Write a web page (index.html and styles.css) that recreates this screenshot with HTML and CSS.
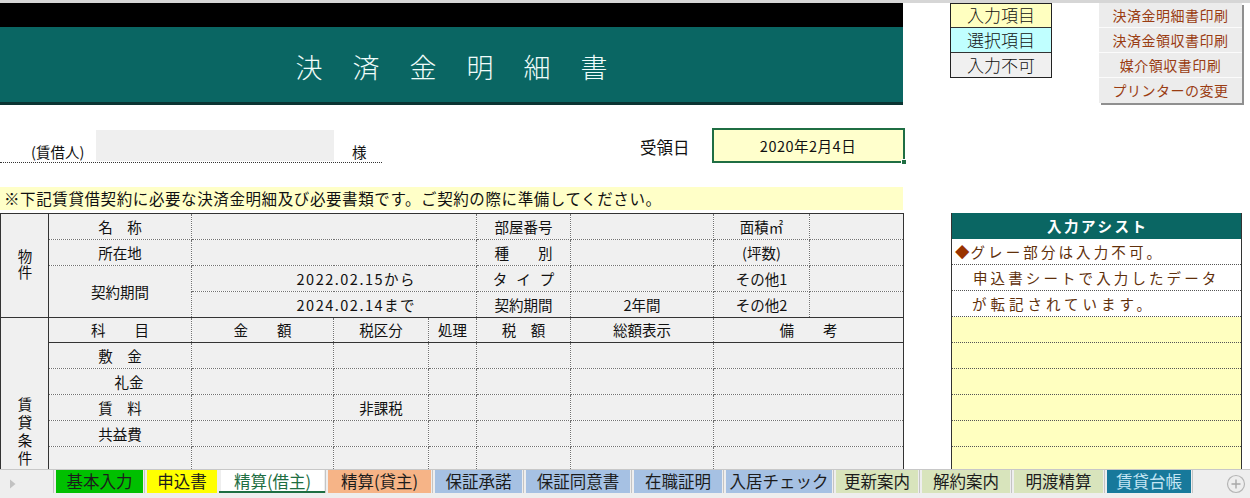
FILE: index.html
```html
<!DOCTYPE html>
<html lang="ja">
<head>
<meta charset="utf-8">
<title>決済金明細書</title>
<link rel="stylesheet" href="styles.css">
</head>
<body>
<div class="page">
  <div class="topline"></div>
  <div class="sheet">
    <div class="main">
      <div class="blackbar"></div>
      <div class="title-band"><h1 class="title">決済金明細書</h1></div>
      <div class="renter-row">
        <div class="renter">
          <span class="renter-label">(賃借人)</span>
          <span class="renter-name"></span>
          <span class="sama">様</span>
        </div>
        <span class="receipt-label">受領日</span>
        <div class="receipt-date">2020年2月4日<span class="handle"></span></div>
      </div>
      <div class="note">※下記賃貸借契約に必要な決済金明細及び必要書類です。ご契約の際に準備してください。</div>
      <table class="grid">
        <colgroup>
          <col class="c48"><col class="c143"><col class="c142"><col class="c95"><col class="c48"><col class="c94"><col class="c143"><col class="c96"><col class="c94">
        </colgroup>
        <tr>
          <td class="side-head sec-bottom" rowspan="4"><span class="vert v1">物件</span></td>
          <td>名　称</td><td colspan="3"></td><td>部屋番号</td><td></td><td>面積㎡</td><td></td>
        </tr>
        <tr>
          <td>所在地</td><td colspan="3"></td><td>種　　別</td><td></td><td>(坪数)</td><td></td>
        </tr>
        <tr>
          <td class="sec-bottom" rowspan="2">契約期間</td><td colspan="3" class="date">2022.02.15から</td><td><span class="spaced">タイプ</span></td><td></td><td>その他1</td><td></td>
        </tr>
        <tr class="sec-end">
          <td colspan="3" class="date">2024.02.14まで</td><td>契約期間</td><td>2年間</td><td>その他2</td><td></td>
        </tr>
        <tr class="head-row">
          <td class="side-head" rowspan="9"><span class="vert v2">賃貸条件</span></td>
          <td>科　　目</td><td>金　　額</td><td>税区分</td><td>処理</td><td>税　額</td><td>総額表示</td><td colspan="2">備　　考</td>
        </tr>
        <tr><td>敷　金</td><td></td><td></td><td></td><td></td><td></td><td colspan="2"></td></tr>
        <tr><td class="reikin">礼金</td><td></td><td></td><td></td><td></td><td></td><td colspan="2"></td></tr>
        <tr><td>賃　料</td><td></td><td>非課税</td><td></td><td></td><td></td><td colspan="2"></td></tr>
        <tr><td>共益費</td><td></td><td></td><td></td><td></td><td></td><td colspan="2"></td></tr>
        <tr><td></td><td></td><td></td><td></td><td></td><td></td><td colspan="2"></td></tr>
        <tr><td></td><td></td><td></td><td></td><td></td><td></td><td colspan="2"></td></tr>
        <tr><td></td><td></td><td></td><td></td><td></td><td></td><td colspan="2"></td></tr>
        <tr><td></td><td></td><td></td><td></td><td></td><td></td><td colspan="2"></td></tr>
      </table>
    </div>
    <div class="side">
      <div class="side-top">
        <div class="legend">
          <div class="legend-item lg-input">入力項目</div>
          <div class="legend-item lg-select">選択項目</div>
          <div class="legend-item lg-locked">入力不可</div>
        </div>
        <div class="buttons">
          <div class="btn">決済金明細書印刷</div>
          <div class="btn">決済金領収書印刷</div>
          <div class="btn">媒介領収書印刷</div>
          <div class="btn">プリンターの変更</div>
        </div>
      </div>
      <div class="assist">
        <div class="assist-head">入力アシスト</div>
        <div class="arow first"><span class="diamond">◆</span>グレー部分は入力不可。</div>
        <div class="arow">申込書シートで入力したデータ</div>
        <div class="arow wide">が転記されています。</div>
        <div class="arow yellow"></div>
        <div class="arow yellow"></div>
        <div class="arow yellow"></div>
        <div class="arow yellow"></div>
        <div class="arow yellow"></div>
        <div class="arow yellow"></div>
        <div class="arow yellow"></div>
      </div>
    </div>
  </div>
  <div class="tabbar">
    <div class="scroll-arrow">
      <svg width="8" height="10" viewBox="0 0 8 10"><path d="M1 0.5 L6.5 5 L1 9.5 Z" fill="#c2c2c2"/></svg>
    </div>
    <div class="tabs">
      <div class="tab t-green">基本入力</div>
      <div class="tab t-yellow">申込書</div>
      <div class="tab t-active">精算(借主)</div>
      <div class="tab t-orange">精算(貸主)</div>
      <div class="tab t-blue">保証承諾</div>
      <div class="tab t-blue">保証同意書</div>
      <div class="tab t-blue">在職証明</div>
      <div class="tab t-blue">入居チェック</div>
      <div class="tab t-lgreen">更新案内</div>
      <div class="tab t-lgreen">解約案内</div>
      <div class="tab t-lgreen">明渡精算</div>
      <div class="tab t-teal">賃貸台帳</div>
    </div>
    <div class="add-sheet">
      <svg width="20" height="20" viewBox="0 0 20 20"><circle cx="10" cy="10" r="8.5" fill="none" stroke="#b5b5b5" stroke-width="1.2"/><path d="M10 5.5 V14.5 M5.5 10 H14.5" stroke="#a8a8a8" stroke-width="1.4"/></svg>
    </div>
  </div>
</div>
</body>
</html>
```

FILE: styles.css
```css
* { box-sizing: border-box; }
html, body { margin: 0; padding: 0; }
body {
  font-family: "Noto Sans CJK JP", "Noto Sans", sans-serif;
  color: #111;
  background: #fff;
}
.page {
  width: 1250px;
  height: 498px;
  overflow: hidden;
  display: flex;
  flex-direction: column;
}
.topline { height: 3px; flex: none; background: #d6d6d6; }
.sheet { flex: 1; min-height: 0; display: flex; overflow: hidden; }
.main { width: 903px; flex: none; }
.blackbar { height: 24px; background: #000; }
.title-band {
  height: 78px;
  background: #0a6663;
  border-bottom: 3px solid #0b3432;
  display: flex;
  align-items: center;
  justify-content: center;
}
.title {
  margin: 0;
  padding-top: 5px;
  font-weight: 300;
  font-size: 27px;
  line-height: 30px;
  letter-spacing: 30px;
  text-indent: 30px;
  color: #effcfa;
}

/* renter row */
.renter-row {
  margin-top: 23px;
  height: 35px;
  display: flex;
  align-items: flex-start;
}
.renter {
  width: 382px;
  height: 35px;
  flex: none;
  display: flex;
  align-items: flex-end;
  padding-left: 31px;
  padding-bottom: 1px;
  border-bottom: 1px dotted #333;
  font-size: 14.5px;
}
.renter-label { width: 65px; line-height: 18px; white-space: nowrap; }
.renter-name { width: 238px; height: 31px; background: #efefef; }
.sama { margin-left: 18px; line-height: 18px; }
.receipt-label {
  flex: none;
  margin-left: 258px;
  margin-top: 8px;
  font-size: 16.5px;
  line-height: 22px;
  white-space: nowrap;
}
.receipt-date {
  position: relative;
  flex: none;
  margin-left: 22px;
  width: 193px;
  height: 35px;
  border: 2px solid #1f6e43;
  background: #ffffcc;
  font-size: 14.5px;
  line-height: 31px;
  letter-spacing: 0.5px;
  text-align: center;
}
.handle {
  position: absolute;
  right: -4px;
  bottom: -4px;
  width: 6px;
  height: 6px;
  background: #1f6e43;
  border: 1px solid #fff;
}

/* note */
.note {
  margin-top: 24px;
  height: 23px;
  background: #ffffc8;
  font-size: 15.5px;
  line-height: 23px;
  letter-spacing: 0.6px;
  padding-left: 4px;
  white-space: nowrap;
}

/* grid */
.grid {
  margin-top: 3px;
  border-collapse: collapse;
  table-layout: fixed;
  width: 903px;
  border: 1px solid #333;
}
.c48 { width: 48px; }
.c143 { width: 143px; }
.c142 { width: 142px; }
.c95 { width: 95px; }
.c94 { width: 94px; }
.c96 { width: 96px; }
.grid tr { height: 26px; }
.grid tr.head-row { height: 25px; }
.grid td {
  padding: 0;
  border: 1px dotted #707070;
  background: #f0f0f0;
  text-align: center;
  vertical-align: middle;
  font-size: 14.5px;
  line-height: 16px;
  white-space: nowrap;
  overflow: hidden;
}
.grid td.side-head { border-right: 1px solid #333; border-left: 1px solid #333; }
.grid td.sec-bottom,
.grid tr.sec-end td,
.grid tr.head-row td { border-bottom: 1px solid #333; }
.grid td.date { text-align: right; padding-right: 60px; letter-spacing: 1.5px; }
.grid td.reikin { padding-left: 18px; }
.vert {
  display: inline-block;
  writing-mode: vertical-rl;
  text-orientation: upright;
  line-height: 16px;
}
.v1 { letter-spacing: 1.5px; }
.v2 { letter-spacing: 3.5px; }
.spaced { letter-spacing: 9px; margin-right: -9px; }

/* side */
.side { width: 347px; flex: none; }
.side-top { display: flex; align-items: flex-start; height: 101px; }
.legend {
  margin-left: 47px;
  width: 102px;
  border: 1px solid #222;
}
.legend-item {
  height: 25px;
  border-top: 1px solid #333;
  font-size: 17px;
  line-height: 23px;
  text-align: center;
  font-weight: 300;
}
.legend-item:first-child { height: 23px; border-top: 0; line-height: 22px; }
.lg-input { background: #ffffc0; }
.lg-select { background: #c0ffff; }
.lg-locked { background: #f0f0f0; }
.buttons {
  margin-left: 47px;
  width: 143px;
  background: #ececec;
  box-shadow: 2px 2px 0 #8f8f8f;
}
.btn {
  height: 25px;
  border-bottom: 1px solid #fbfbfb;
  color: #9a3c12;
  font-size: 14px;
  line-height: 24px;
  letter-spacing: 0.5px;
  text-align: center;
}
.btn:last-child { border-bottom: 0; }

.assist {
  margin-left: 48px;
  margin-top: 109px;
  width: 291px;
  border-left: 1px solid #333;
  border-right: 1px solid #333;
}
.assist-head {
  height: 26px;
  background: #0a6663;
  color: #fff;
  font-size: 14.5px;
  font-weight: 700;
  line-height: 26px;
  letter-spacing: 2.5px;
  text-indent: 2.5px;
  text-align: center;
}
.arow {
  height: 26px;
  border-bottom: 1px dotted #555;
  background: #fff;
  color: #5f300b;
  font-size: 14.5px;
  line-height: 25px;
  letter-spacing: 3.1px;
  padding-left: 21px;
  white-space: nowrap;
}
.arow.first { padding-left: 3px; }
.arow.wide { letter-spacing: 4px; padding-left: 20px; }
.diamond { color: #993300; letter-spacing: 1px; }
.arow.yellow { background: #ffffc0; }

/* tab bar */
.tabbar {
  height: 29px;
  flex: none;
  border-top: 1px solid #c8c8c8;
  background: #eeeeee;
  display: flex;
  align-items: flex-start;
}
.scroll-arrow {
  width: 53px;
  height: 28px;
  display: flex;
  align-items: center;
  padding-left: 9px;
}
.tabs {
  display: grid;
  grid-template-columns: 91px 74px 107px 107px 91px 108px 92px 110px 86px 92px 93px 88px;
  height: 23px;
  border-right: 1px solid #c4c4c4;
}
.tab {
  border-left: 1px solid #c4c4c4;
  padding: 0 1px 0 2px;
  background-clip: content-box;
  font-size: 16.5px;
  line-height: 23px;
  text-align: center;
  color: #1c1c1c;
  white-space: nowrap;
  overflow: hidden;
}
.t-green { background-color: #00c000; }
.t-yellow { background-color: #ffff00; }
.t-active {
  background-color: #fff;
  color: #1e6e42;
  border-left-color: transparent;
  box-shadow: inset 0 -2px 0 #1e6e42;
}
.t-orange { background-color: #f6b487; }
.t-blue { background-color: #a6c1e3; }
.t-lgreen { background-color: #d8e4bc; }
.t-teal { background-color: #17799b; color: #c4e6f4; }
.add-sheet {
  margin-left: 33px;
  height: 28px;
  display: flex;
  align-items: center;
}
```
